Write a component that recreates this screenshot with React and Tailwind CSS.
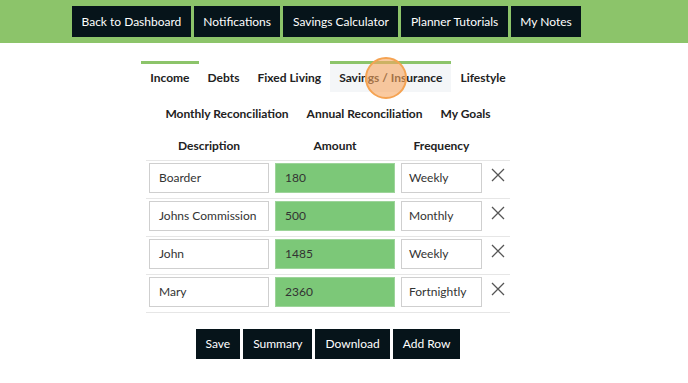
import { useState } from "react";

const navItems = ["Back to Dashboard", "Notifications", "Savings Calculator", "Planner Tutorials", "My Notes"];
const tabsTop = ["Income", "Debts", "Fixed Living", "Savings / Insurance", "Lifestyle"];
const tabsBottom = ["Monthly Reconciliation", "Annual Reconciliation", "My Goals"];

const initialRows = [
  { desc: "Boarder", amount: "180", freq: "Weekly" },
  { desc: "Johns Commission", amount: "500", freq: "Monthly" },
  { desc: "John", amount: "1485", freq: "Weekly" },
  { desc: "Mary", amount: "2360", freq: "Fortnightly" },
];

function CloseIcon() {
  return (
    <svg width="16" height="16" viewBox="0 0 16 16" fill="none" stroke="#555" strokeWidth="1.3">
      <path d="M2 2 L14 14 M14 2 L2 14" />
    </svg>
  );
}

export default function App() {
  const [rows, setRows] = useState(initialRows);
  const [active, setActive] = useState("Savings / Insurance");

  const removeRow = (i) => setRows(rows.filter((_, idx) => idx !== i));

  return (
    <div className="relative min-h-screen bg-white text-[#222]" style={{ fontFamily: "Lato, 'Open Sans', sans-serif" }}>
      {/* top nav */}
      <div className="h-[43px] bg-[#8cc46a] flex gap-[3px] pl-[72px] pt-[6px]">
        {navItems.map((item) => (
          <button key={item} className="h-[31px] px-[9.5px] bg-[#06141a] text-white text-[12px] leading-none whitespace-nowrap">
            {item}
          </button>
        ))}
      </div>

      <div className="ml-[146px] w-[364px]">
        {/* tabs */}
        <div className="flex justify-center mt-[18px] -mx-[10px]">
          {tabsTop.map((t) => (
            <button
              key={t}
              onClick={() => setActive(t)}
              className={
                "h-[31px] px-[9px] border-t-[3px] text-[12px] font-bold leading-none whitespace-nowrap " +
                (t === "Income" || t === active ? "border-[#8cc46a] " : "border-transparent ") +
                (t === active ? "bg-[#f4f6f8]" : "")
              }
            >
              {t}
            </button>
          ))}
        </div>
        <div className="flex justify-center mt-[5px] -mx-[10px]">
          {tabsBottom.map((t) => (
            <button key={t} className="h-[31px] px-[9px] border-t-[3px] border-transparent text-[12px] font-bold leading-none whitespace-nowrap">
              {t}
            </button>
          ))}
        </div>

        {/* table */}
        <div className="grid grid-cols-[126px_126px_87px_25px] text-[12px] font-bold leading-[16px] pt-[10px] pb-[6px] text-center">
          <div>Description</div>
          <div>Amount</div>
          <div>Frequency</div>
          <div></div>
        </div>
        {rows.map((r, i) => (
          <div key={i} className="grid grid-cols-[126px_126px_87px_25px] border-t border-[#e6e6e6] pt-[2px] pb-[5px] text-[12px] text-[#333]">
            <div className="px-[3px]">
              <div className="h-[30px] border border-[#cfcfcf] flex items-center pl-[9px] whitespace-nowrap">{r.desc}</div>
            </div>
            <div className="px-[3px]">
              <div className="h-[30px] border border-[#9dd49a] bg-[#7cc878] flex items-center pl-[9px]">{r.amount}</div>
            </div>
            <div className="px-[3px]">
              <div className="h-[30px] border border-[#cfcfcf] flex items-center pl-[7px]">{r.freq}</div>
            </div>
            <div className="flex justify-center pt-[4px]">
              <button onClick={() => removeRow(i)} className="h-[16px]">
                <CloseIcon />
              </button>
            </div>
          </div>
        ))}
        <div className="border-t border-[#e6e6e6]"></div>

        {/* actions */}
        <div className="flex justify-center gap-[3px] mt-[16px]">
          {["Save", "Summary", "Download", "Add Row"].map((b) => (
            <button key={b} className="h-[30px] px-[10px] bg-[#06141a] text-white text-[12px] leading-none">
              {b}
            </button>
          ))}
        </div>
      </div>

      {/* click highlight */}
      <div className="absolute left-[365px] top-[57px] w-[42px] h-[42px] rounded-full bg-[#f7a760]/60 border-2 border-[#f5a352]"></div>
    </div>
  );
}
